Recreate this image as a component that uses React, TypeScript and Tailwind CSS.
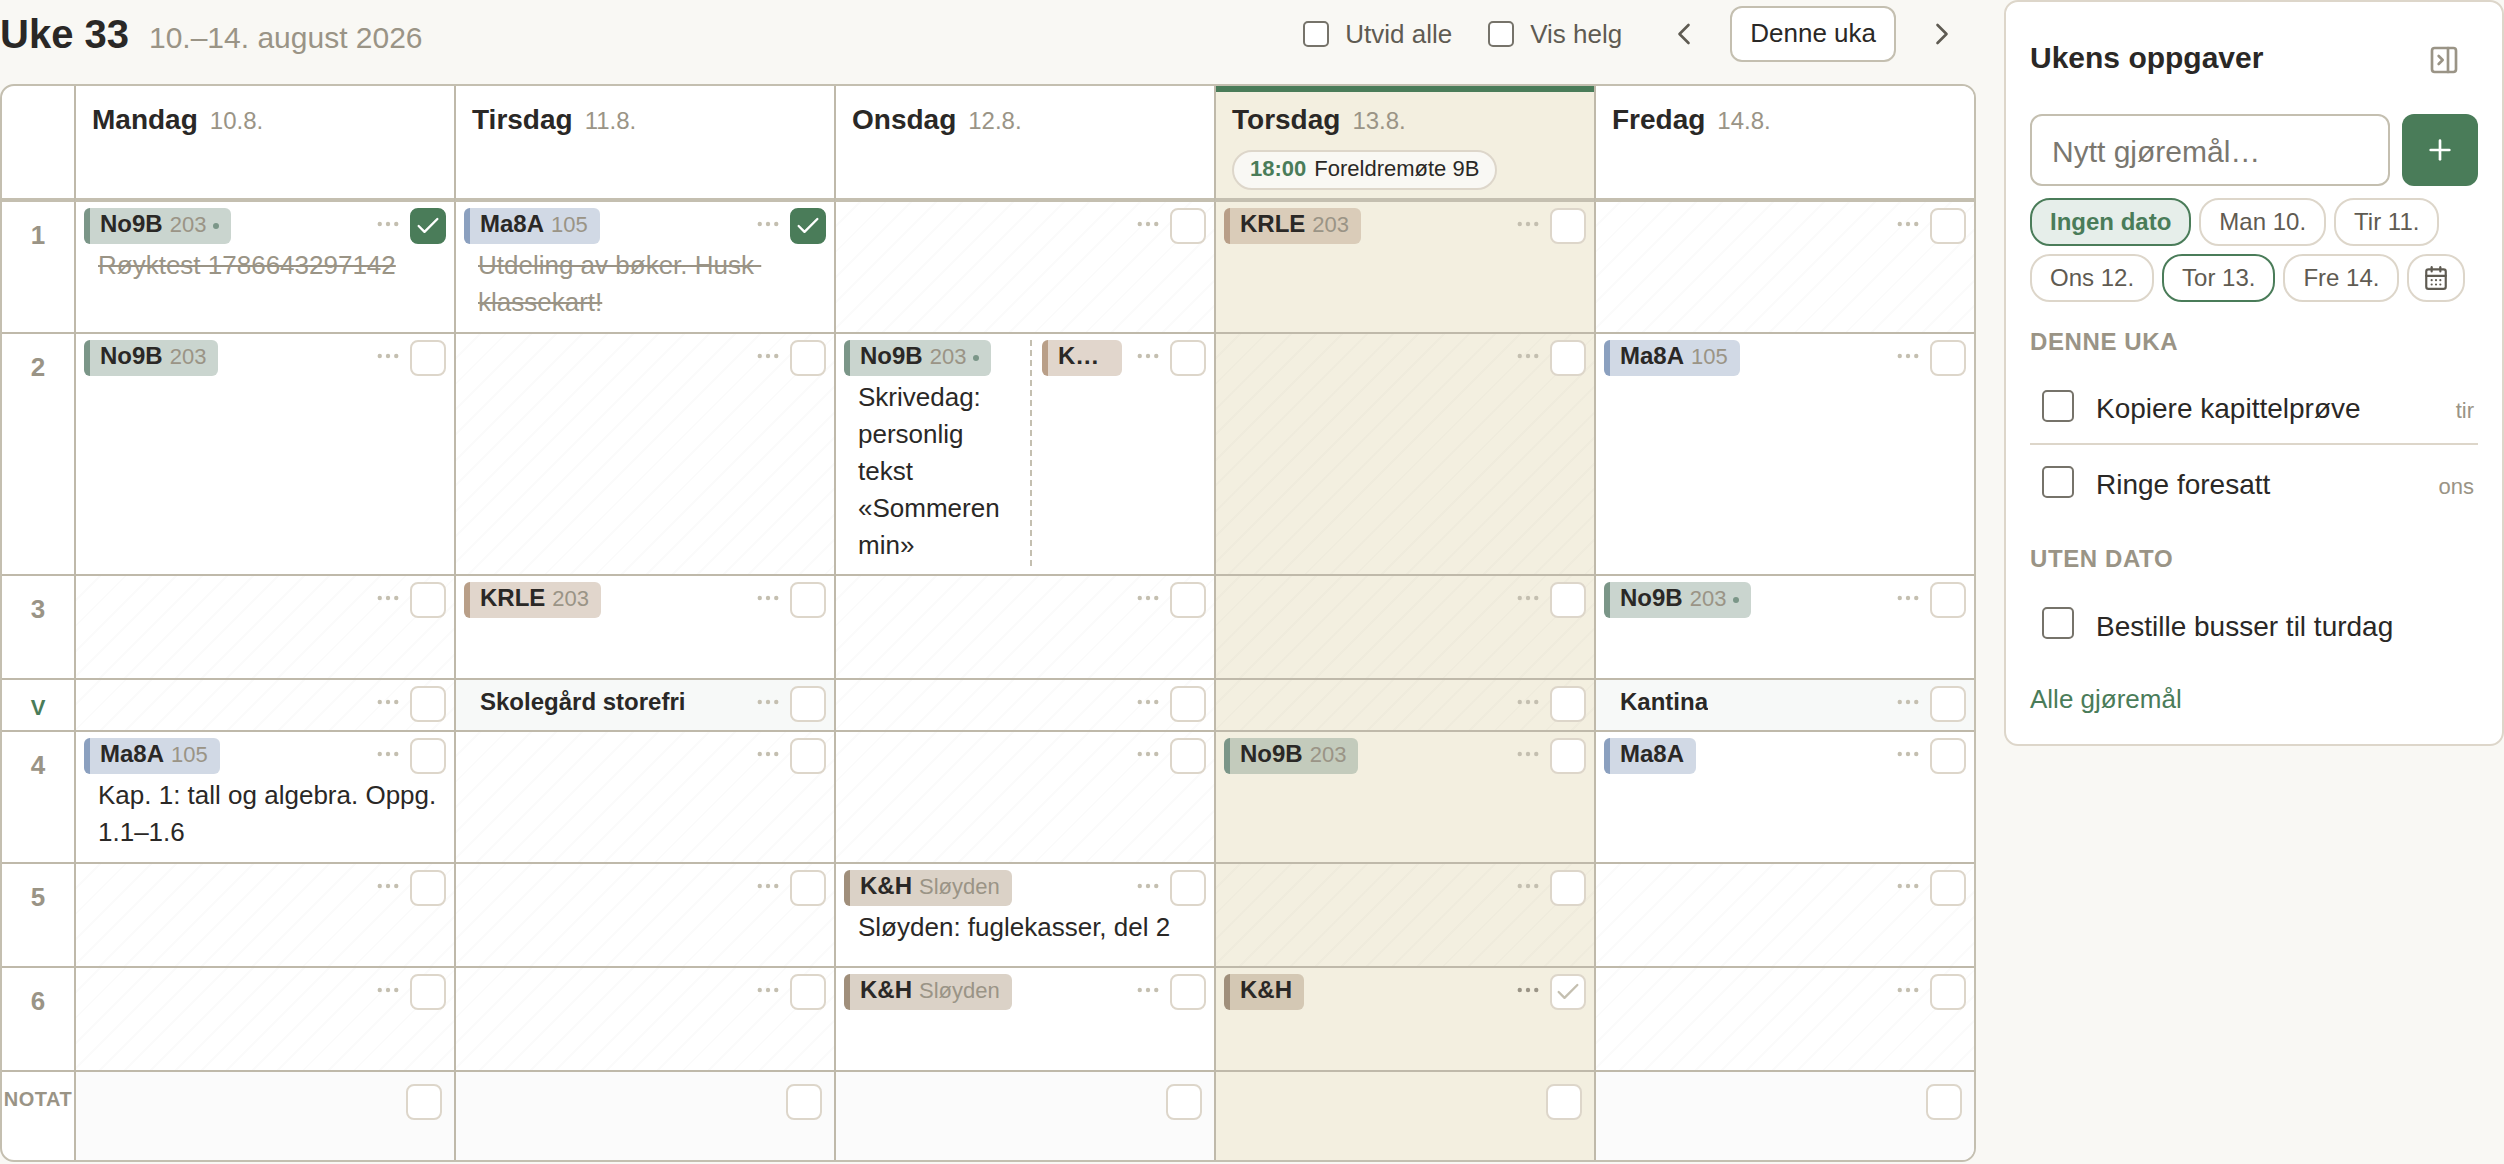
import type { ReactNode } from "react";
import {
  CalendarDays,
  Check,
  ChevronLeft,
  ChevronRight,
  PanelRightClose,
  Plus,
} from "lucide-react";

type Tone = "green" | "blue" | "tan" | "brown" | "plain";

interface Lesson {
  subject: string;
  room?: string;
  dot?: boolean;
  tone: Tone;
  note?: string;
  done?: boolean;
  suggest?: boolean;
  second?: Lesson;
}

interface Row {
  label: string;
  height: string;
  labelClass: string;
  cells: (Lesson | null)[];
}

const toneClass: Record<Tone, string> = {
  green: "border-[#7b9688] bg-[#7b9688]/40",
  blue: "border-[#8ba0bf] bg-[#8ba0bf]/40",
  tan: "border-[#b99f88] bg-[#b3987f]/40",
  brown: "border-[#a08f7b] bg-[#a68e73]/40",
  plain: "border-transparent",
};

const TODAY = 3;

const days = [
  { name: "Mandag", date: "10.8." },
  { name: "Tirsdag", date: "11.8." },
  { name: "Onsdag", date: "12.8." },
  { name: "Torsdag", date: "13.8.", event: { time: "18:00", title: "Foreldremøte 9B" } },
  { name: "Fredag", date: "14.8." },
];

const number = "pt-[15px] text-[26px] text-[#9a9486]";

const rows: Row[] = [
  {
    label: "1",
    height: "h-[132px]",
    labelClass: number,
    cells: [
      { subject: "No9B", room: "203", dot: true, tone: "green", note: "Røyktest 1786643297142", done: true },
      { subject: "Ma8A", room: "105", tone: "blue", note: "Utdeling av bøker. Husk klassekart!", done: true },
      null,
      { subject: "KRLE", room: "203", tone: "tan" },
      null,
    ],
  },
  {
    label: "2",
    height: "h-[132px]",
    labelClass: number,
    cells: [
      { subject: "No9B", room: "203", tone: "green" },
      null,
      {
        subject: "No9B",
        room: "203",
        dot: true,
        tone: "green",
        note: "Skrivedag: personlig tekst «Sommeren min»",
        second: { subject: "KRLE", tone: "tan" },
      },
      null,
      { subject: "Ma8A", room: "105", tone: "blue" },
    ],
  },
  {
    label: "3",
    height: "h-[104px]",
    labelClass: number,
    cells: [
      null,
      { subject: "KRLE", room: "203", tone: "tan" },
      null,
      null,
      { subject: "No9B", room: "203", dot: true, tone: "green" },
    ],
  },
  {
    label: "V",
    height: "h-[52px]",
    labelClass: "pt-[10px] text-[22px] text-[#4a7c59]",
    cells: [
      null,
      { subject: "Skolegård storefri", tone: "plain" },
      null,
      null,
      { subject: "Kantina", tone: "plain" },
    ],
  },
  {
    label: "4",
    height: "h-[132px]",
    labelClass: number,
    cells: [
      { subject: "Ma8A", room: "105", tone: "blue", note: "Kap. 1: tall og algebra. Oppg. 1.1–1.6" },
      null,
      null,
      { subject: "No9B", room: "203", tone: "green" },
      { subject: "Ma8A", tone: "blue" },
    ],
  },
  {
    label: "5",
    height: "h-[104px]",
    labelClass: number,
    cells: [
      null,
      null,
      { subject: "K&H", room: "Sløyden", tone: "brown", note: "Sløyden: fuglekasser, del 2" },
      null,
      null,
    ],
  },
  {
    label: "6",
    height: "h-[104px]",
    labelClass: number,
    cells: [
      null,
      null,
      { subject: "K&H", room: "Sløyden", tone: "brown" },
      { subject: "K&H", tone: "brown", suggest: true },
      null,
    ],
  },
];

function DoneBox({ label, done, suggest }: { label: string; done?: boolean; suggest?: boolean }) {
  return (
    <label className="grid size-9 shrink-0 place-items-center">
      <input
        type="checkbox"
        aria-label={label}
        defaultChecked={done}
        className="col-start-1 row-start-1 size-9 appearance-none rounded-lg border-2 border-[#ddd6ca] bg-white checked:border-[#4a7c59] checked:bg-[#4a7c59]"
      />
      {(done || suggest) && (
        <Check
          size={28}
          strokeWidth={2}
          className={`pointer-events-none z-10 col-start-1 row-start-1 ${done ? "text-white" : "text-[#c4bfb0]"}`}
        />
      )}
    </label>
  );
}

function Actions({ where, lesson }: { where: string; lesson: Lesson | null }) {
  return (
    <div className="flex shrink-0 items-start gap-1">
      <button
        type="button"
        aria-label={`Flere valg, ${where}`}
        className={`grid h-8 w-9 place-items-center ${lesson?.suggest ? "text-[#9a9486]" : "text-[#c4bfb0]"}`}
      >
        <svg width="24" height="6" viewBox="0 0 24 6" fill="currentColor" aria-hidden="true">
          <circle cx="3.75" cy="3" r="2.2" />
          <circle cx="12" cy="3" r="2.2" />
          <circle cx="20.25" cy="3" r="2.2" />
        </svg>
      </button>
      <DoneBox label={`Ferdig, ${where}`} done={lesson?.done} suggest={lesson?.suggest} />
    </div>
  );
}

function Chip({ lesson }: { lesson: Lesson }) {
  return (
    <div
      className={`flex h-9 min-w-0 items-baseline gap-[7px] rounded-md border-l-[6px] pr-3 pl-[10px] ${toneClass[lesson.tone]}`}
    >
      <span className="truncate text-[24px] leading-8 font-bold">{lesson.subject}</span>
      {lesson.room && <span className="text-[22px] leading-8 text-[#9a9486]">{lesson.room}</span>}
      {lesson.dot && <span className="size-[6px] shrink-0 self-center rounded-full bg-[#7b9688]" />}
    </div>
  );
}

function Note({ lesson }: { lesson: Lesson }) {
  if (!lesson.note) return null;
  return (
    <p
      className={`mt-[3px] pb-[2px] pl-[14px] text-[26px] leading-[37px] whitespace-pre-wrap ${lesson.done ? "text-[#9a9486] line-through" : ""}`}
    >
      {lesson.note}
    </p>
  );
}

function DayCell({ lesson, where, today }: { lesson: Lesson | null; where: string; today: boolean }) {
  const base = today ? "bg-[#f3efe0]" : lesson?.tone === "plain" ? "bg-[#f7f9f8]" : "bg-white";
  const stripes = lesson
    ? ""
    : "bg-[repeating-linear-gradient(135deg,transparent_0_16px,rgba(0,0,0,0.014)_16px_18px)]";
  return (
    <td className={`border-b-2 border-l-2 border-[#bfb9aa] px-2 pt-[6px] pb-0 align-top ${base} ${stripes}`}>
      {lesson?.second ? (
        <div className="grid grid-cols-2 gap-[10px] pb-2">
          <div className="min-w-0">
            <div className="flex">
              <Chip lesson={lesson} />
            </div>
            <Note lesson={lesson} />
          </div>
          <div className="min-w-0 border-l-2 border-dashed border-[#c4bfb0] pl-[10px]">
            <div className="flex justify-between gap-2">
              <Chip lesson={lesson.second} />
              <Actions where={where} lesson={lesson} />
            </div>
          </div>
        </div>
      ) : (
        <>
          <div className="flex justify-between gap-2">
            {lesson ? <Chip lesson={lesson} /> : <span />}
            <Actions where={where} lesson={lesson} />
          </div>
          {lesson && <Note lesson={lesson} />}
        </>
      )}
    </td>
  );
}

const box = "shrink-0 appearance-none border-2 border-[#76736a] bg-white";

function Toggle({ label }: { label: string }) {
  return (
    <label className="flex items-center gap-4 text-[26px] leading-9 text-[#5f5b52]">
      <input type="checkbox" className={`${box} size-[26px] rounded-[5px]`} />
      {label}
    </label>
  );
}

function IconButton({ label, className, children }: { label: string; className: string; children: ReactNode }) {
  return (
    <button type="button" aria-label={label} className={`grid size-[68px] place-items-center ${className}`}>
      {children}
    </button>
  );
}

const dateChoices = ["Ingen dato", "Man 10.", "Tir 11.", "Ons 12.", "Tor 13.", "Fre 14."];

function choiceClass(choice: string) {
  if (choice === "Ingen dato") return "border-[#4a7c59] bg-[#e6eeea] font-bold text-[#4a7c59]";
  if (choice === "Tor 13.") return "border-[#4a7c59] bg-white text-[#5f5b52]";
  return "border-[#ddd6ca] bg-white text-[#5f5b52]";
}

function TaskGroup({ title, tasks }: { title: string; tasks: { text: string; day?: string }[] }) {
  return (
    <section className="mt-6">
      <h3 className="mb-[11px] text-[24px] leading-8 font-bold tracking-wide text-[#9a9486] uppercase">{title}</h3>
      <ul>
        {tasks.map((task) => (
          <li key={task.text} className="border-b-2 border-[#ddd6ca] last:border-b-0">
            <label className="flex h-[74px] items-center pr-1 pl-3">
              <input type="checkbox" className={`${box} size-8 rounded-[5px]`} />
              <span className="flex flex-1 items-baseline justify-between pt-[7px] pl-[22px] text-[28px] leading-9">
                {task.text}
                {task.day && <span className="text-[22px] text-[#9a9486]">{task.day}</span>}
              </span>
            </label>
          </li>
        ))}
      </ul>
    </section>
  );
}

export default function App() {
  return (
    <div className="flex min-h-screen items-start gap-7 bg-[#f9f8f4] font-['Liberation_Sans',Arial,sans-serif] text-[#2a2826]">
      <main className="min-w-0 flex-1">
        <header className="mb-4 flex items-center justify-between">
          <div className="flex items-baseline gap-5 pt-1">
            <h1 className="text-[40px] leading-[48px] font-bold">Uke 33</h1>
            <span className="text-[30px] leading-[48px] text-[#9a9486]">10.–14. august 2026</span>
          </div>
          <div className="flex items-center">
            <div className="mr-7 flex gap-9">
              <Toggle label="Utvid alle" />
              <Toggle label="Vis helg" />
            </div>
            <div className="flex items-center gap-3">
              <IconButton label="Forrige uke" className="text-[#5f5b52]">
                <ChevronLeft size={36} strokeWidth={1.75} />
              </IconButton>
              <button
                type="button"
                className="h-14 rounded-xl border-2 border-[#c4bfb0] bg-white px-[18px] pb-[2px] text-[26px] leading-9"
              >
                Denne uka
              </button>
              <IconButton label="Neste uke" className="text-[#5f5b52]">
                <ChevronRight size={36} strokeWidth={1.75} />
              </IconButton>
            </div>
          </div>
        </header>

        <div className="overflow-hidden rounded-[14px] border-2 border-[#c4bfb0] bg-white">
          <table className="w-full table-fixed border-separate border-spacing-0">
            <thead>
              <tr>
                <td className="w-[72px] border-b-4 border-[#c4bfb0]" />
                {days.map((day, i) => (
                  <th
                    key={day.name}
                    scope="col"
                    className={`h-[116px] border-b-4 border-l-2 border-b-[#c4bfb0] border-l-[#bfb9aa] px-4 pt-[14px] pb-0 text-left align-top font-normal ${
                      i === TODAY ? "bg-[#f3efe0] shadow-[inset_0_6px_0_#4a7c59]" : "bg-white"
                    }`}
                  >
                    <div className="flex h-10 items-baseline gap-3 leading-10">
                      <span className="text-[28px] font-bold">{day.name}</span>
                      <span className="text-[24px] text-[#9a9486]">{day.date}</span>
                    </div>
                    {day.event && (
                      <div className="mt-[10px] mb-2 flex h-10 w-fit gap-2 rounded-full border-2 border-[#ddd6ca] bg-[#f9f8f4] px-4 text-[22px] leading-[34px]">
                        <span className="font-bold text-[#4a7c59]">{day.event.time}</span>
                        <span>{day.event.title}</span>
                      </div>
                    )}
                  </th>
                ))}
              </tr>
            </thead>
            <tbody>
              {rows.map((row) => (
                <tr key={row.label} className={row.height}>
                  <th
                    scope="row"
                    className={`border-b-2 border-[#bfb9aa] px-0 pb-0 text-center align-top leading-9 font-bold ${row.labelClass}`}
                  >
                    {row.label}
                  </th>
                  {row.cells.map((lesson, i) => (
                    <DayCell
                      key={days[i].name}
                      lesson={lesson}
                      where={`${days[i].name} ${row.label}`}
                      today={i === TODAY}
                    />
                  ))}
                </tr>
              ))}
              <tr className="h-[88px]">
                <th
                  scope="row"
                  className="px-0 pt-[9px] pb-0 text-center align-top text-[20px] leading-9 font-bold tracking-wide text-[#9a9486]"
                >
                  NOTAT
                </th>
                {days.map((day, i) => (
                  <td
                    key={day.name}
                    className={`border-l-2 border-[#bfb9aa] p-3 align-top ${i === TODAY ? "bg-[#f3efe0]" : "bg-[#fbfbfb]"}`}
                  >
                    <div className="flex justify-end">
                      <DoneBox label={`Ferdig, notat ${day.name}`} />
                    </div>
                  </td>
                ))}
              </tr>
            </tbody>
          </table>
        </div>
      </main>

      <aside className="w-[500px] shrink-0 rounded-[14px] border-2 border-[#ddd6ca] bg-white p-6">
        <div className="mb-5 flex items-center justify-between">
          <h2 className="pb-1 text-[30px] leading-10 font-bold">Ukens oppgaver</h2>
          <IconButton label="Skjul panel" className="text-[#9a9486]">
            <PanelRightClose size={32} strokeWidth={2} />
          </IconButton>
        </div>
        <form className="flex gap-3" onSubmit={(e) => e.preventDefault()}>
          <input
            type="text"
            aria-label="Nytt gjøremål"
            placeholder="Nytt gjøremål…"
            className="h-[72px] min-w-0 flex-1 rounded-xl border-2 border-[#c4bfb0] bg-white px-5 pt-1 text-[30px] placeholder:text-[#7a776f]"
          />
          <button
            type="submit"
            aria-label="Legg til"
            className="grid w-[76px] place-items-center rounded-xl bg-[#4a7c59] text-white"
          >
            <Plus size={32} strokeWidth={2} />
          </button>
        </form>
        <div className="mt-3 flex flex-wrap gap-2">
          {dateChoices.map((choice) => (
            <button
              key={choice}
              type="button"
              className={`h-12 rounded-[20px] border-2 px-[18px] text-[24px] leading-8 ${choiceClass(choice)}`}
            >
              {choice}
            </button>
          ))}
          <button
            type="button"
            aria-label="Velg dato"
            className="h-12 rounded-[20px] border-2 border-[#ddd6ca] bg-white px-[14px] text-[#5f5b52]"
          >
            <CalendarDays size={26} strokeWidth={2} />
          </button>
        </div>
        <TaskGroup
          title="Denne uka"
          tasks={[
            { text: "Kopiere kapittelprøve", day: "tir" },
            { text: "Ringe foresatt", day: "ons" },
          ]}
        />
        <TaskGroup title="Uten dato" tasks={[{ text: "Bestille busser til turdag" }]} />
        <a href="#alle" className="mt-[18px] block text-[26px] leading-[42px] text-[#4a7c59]">
          Alle gjøremål
        </a>
      </aside>
    </div>
  );
}
